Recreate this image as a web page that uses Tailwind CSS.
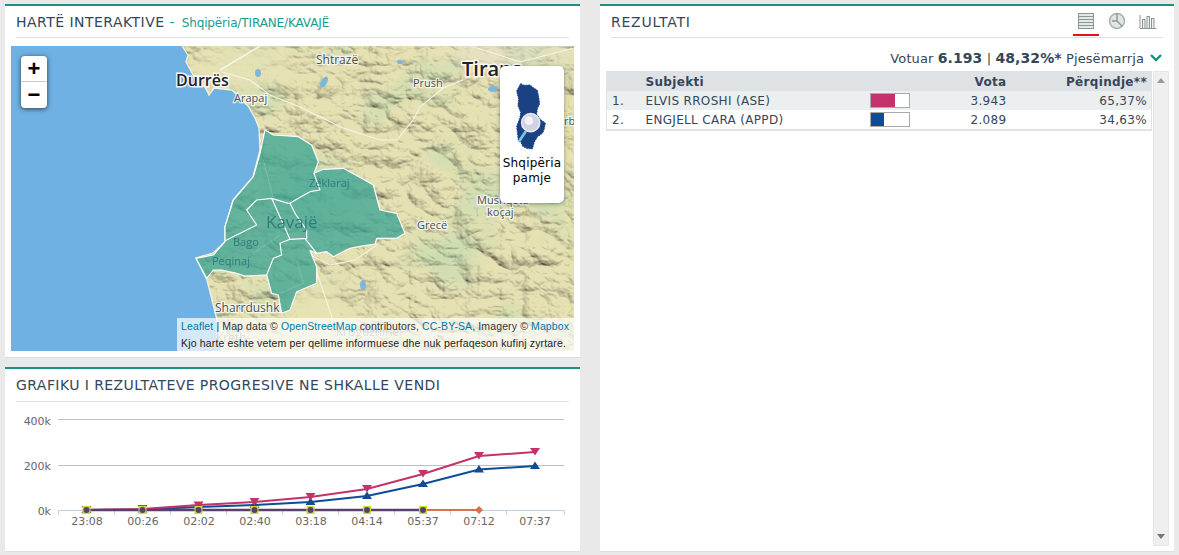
<!DOCTYPE html>
<html lang="sq">
<head>
  <meta charset="UTF-8">
  <title>Rezultatet - Kavajë</title>
  <script src="https://cdn.jsdelivr.net/npm/@tailwindcss/browser@4"></script>
</head>
<body class="bg-[#e9e9e9] text-[#34465a] font-['DejaVu_Sans',sans-serif] overflow-hidden">
  <div class="w-[1179px] h-[555px] pl-[5px] pt-[4px] flex gap-[20px]">

    <!-- left column -->
    <div class="w-[575px] flex flex-col gap-[10px]">

      <!-- map panel -->
      <section class="h-[353px] bg-white border-t-2 border-[#1a8f85] px-[6px] shadow-[0_1px_0_#dedede]">
        <div class="mx-[5px] h-[32px] pt-[7px] border-b border-[#e0e0e0] flex items-baseline text-[14px] leading-[18px] whitespace-nowrap">
          <h2 class="tracking-[.47px]">HARTË INTERAKTIVE</h2>
          <span class="text-[#1a9b8f] ml-[5px]">-</span>
          <span class="text-[#1a9b8f] text-[12px] ml-[7px] tracking-[-.12px]">Shqipëria/TIRANE/KAVAJË</span>
        </div>
        <div class="relative mt-[8px] w-[563px] h-[305px] overflow-hidden bg-[#6fb1e3]">
          <svg class="absolute inset-0" width="563" height="305" viewBox="11 46 563 305">
            <defs>
              <clipPath id="land"><path d="M182 46 188 55 186 62 197 82 205 87 209 95 214 88 232 90 248 106 255 118 259 128 260 150 253 177 233 200 225 227 225 242 213 253 196 258 207 280 212 300 217 320 222 351H574V46Z"/></clipPath>
              <filter id="hill" x="0" y="0" width="100%" height="100%">
                <feTurbulence type="turbulence" baseFrequency=".022 .03" numOctaves="5" seed="23"/>
                <feDiffuseLighting surfaceScale="9" diffuseConstant="1.17" lighting-color="#fff">
                  <feDistantLight azimuth="300" elevation="58"/>
                </feDiffuseLighting>
              </filter>
              <filter id="green" x="0" y="0" width="100%" height="100%">
                <feTurbulence type="fractalNoise" baseFrequency=".014 .018" numOctaves="3" seed="4"/>
                <feColorMatrix values="0 0 0 0 .58  0 0 0 0 .72  0 0 0 0 .44  3.6 0 0 0 -1.75"/>
              </filter>
              <filter id="soft"><feGaussianBlur stdDeviation="14"/></filter>
            </defs>
            <g clip-path="url(#land)">
              <rect x="11" y="46" width="563" height="305" fill="#e6e1b2"/>
              <rect x="11" y="46" width="563" height="305" filter="url(#green)" opacity=".8"/>
              <rect class="mix-blend-multiply" x="11" y="46" width="563" height="305" filter="url(#hill)" opacity=".6"/>
              <path d="M185 46H300L270 85 235 100 205 90Z" fill="#e6e2b4" filter="url(#soft)"/>
              <path d="M290 285 345 280 350 351H270Z" fill="#e8e3b2" filter="url(#soft)"/>
              <path d="M430 46H574V60L480 72Z" fill="#e6e0c6" filter="url(#soft)"/>
            </g>
            <path d="M182 46 188 55 186 62 197 82 205 87 209 95 214 88 232 90 248 106 255 118 259 128 260 150 253 177 233 200 225 227 225 242 213 253 196 258 207 280 212 300 217 320 222 351" fill="none" stroke="#f3f2e0" stroke-width="1.3"/>
            <!-- roads -->
            <g fill="none" stroke="#f6f4e6">
              <path stroke-width="1.6" d="M220 70 260 46"/>
              <path stroke-width="1.1" d="M463 80 443 88 420 107 413 120 397 140 380 140 343 128 300 107 270 95 250 80 222 72"/>
              <path stroke-width="1.1" d="M305 238 333 320"/>
              <path stroke-width="1" d="M310 255 330 265 355 260 378 244"/>
              <path stroke-width="1" d="M470 46 490 52 520 62 574 48"/>
            </g>
            <!-- lakes -->
            <g fill="#7cb6dc">
              <ellipse cx="258" cy="73" rx="3" ry="4"/>
              <ellipse cx="324" cy="82" rx="3" ry="6" transform="rotate(30 324 82)"/>
              <ellipse cx="400" cy="62" rx="3" ry="2"/>
              <ellipse cx="493" cy="89" rx="5" ry="3"/>
              <ellipse cx="363" cy="285" rx="3" ry="5"/>
            </g>
            <!-- place names -->
            <g font-family="'Open Sans',sans-serif" fill="#45504c" stroke="#fff" stroke-opacity=".75" stroke-width="2.500" paint-order="stroke">
              <text x="176" y="86" font-size="16" font-weight="600" fill="#222" stroke-opacity=".9" stroke-width="3">Durrës</text>
              <text x="234" y="102" font-size="11">Arapaj</text>
              <text x="316" y="64" font-size="12">Shtrazë</text>
              <text x="413" y="87" font-size="11">Prush</text>
              <text x="462" y="76" font-size="20" font-weight="600" fill="#222" stroke-opacity=".9" stroke-width="3">Tirana</text>
              <text x="564" y="125" font-size="11">rb</text>
              <text x="417" y="229" font-size="11">Grecë</text>
              <text x="477" y="204" font-size="11">Mushqeta</text>
              <text x="487" y="216" font-size="11">koçaj</text>
              <text x="215" y="312" font-size="12">Sharrdushk</text>
              <text x="216" y="342" font-size="12" opacity=".55">Kreth-</text>
              <text x="336" y="336" font-size="12" opacity=".55">Krogozhine</text>
            </g>
            <!-- Kavajë units, traced in zoomed crop coordinates -->
            <g transform="translate(170 120) scale(.33333)">
              <path fill="#3fa595" fill-opacity=".78" stroke="#fff" stroke-width="3.500" stroke-linejoin="round" d="M285 30 310 45 385 50 425 75 445 125 432 160 460 148 520 145 580 178 610 195 630 270 680 280 705 340 680 355 620 355 615 372 575 378 540 385 490 410 470 395 440 400 420 392 440 440 440 490 380 515 360 570 335 580 325 525 305 520 290 465 225 468 200 460 155 450 130 450 110 475 78 415 130 405 165 365 165 320 190 240 250 170 270 100Z"/>
              <g fill="none" stroke="#fff" stroke-width="3.500" stroke-linejoin="round">
                <path d="M165 362 260 315 230 270 260 240 305 235 360 358 410 355 410 330 375 280 360 250 385 235 420 215 450 210 432 160"/>
                <path d="M305 235 355 250 360 250"/>
                <path d="M360 358 330 370 335 405 310 415 290 465"/>
                <path d="M405 355 440 400"/>
              </g>
              <g fill="none" stroke="#fff" stroke-opacity=".25" stroke-width="2">
                <path d="M280 120 310 235"/>
                <path d="M250 400 330 345"/>
                <path d="M380 420 400 490 330 520"/>
              </g>
            </g>
            <g font-family="'Open Sans',sans-serif" fill="#2a7678" opacity=".9">
              <text x="266" y="228" font-size="17">Kavajë</text>
              <text x="309" y="187" font-size="11">Zëklaraj</text>
              <text x="233" y="246" font-size="11">Bago</text>
              <text x="212" y="265" font-size="11">Peqinaj</text>
            </g>
          </svg>

          <!-- zoom control -->
          <div class="absolute left-[10px] top-[10px] w-[26px] h-[52px] bg-white rounded-[4px] shadow-[0_1px_5px_rgba(0,0,0,.65)] flex flex-col text-black font-bold font-['Liberation_Sans',sans-serif]">
            <span class="h-[26px] border-b border-[#ccc] flex items-center justify-center text-[22px] leading-none">+</span>
            <span class="h-[26px] flex items-center justify-center text-[22px] leading-none">−</span>
          </div>

          <!-- country view button -->
          <div class="absolute left-[489px] top-[20px] w-[64px] h-[137px] bg-white rounded-[5px] shadow-[0_1px_4px_rgba(0,0,0,.35)] flex flex-col items-center">
            <svg width="64" height="90" viewBox="600 197 192 270">
              <path fill="#1a4182" stroke="#1a4182" stroke-width="3" stroke-dasharray="5 3" d="M662 250 672 255 690 254 700 262 712 270 716 290 719 310 712 325 710 342 722 358 736 368 733 385 728 398 712 410 703 425 697 446 680 444 668 438 662 424 655 420 652 395 650 378 660 352 662 336 654 316 656 296 650 272Z"/>
              <path stroke="#7cc4e4" stroke-width="8" d="M678 392 656 425"/>
              <circle cx="692" cy="367" r="27" fill="#d2d2e6" stroke="#e9e9f2" stroke-width="5"/>
              <circle cx="687" cy="361" r="13" fill="#f2f2f8"/>
            </svg>
            <span class="text-[12px] leading-[15px] text-center text-black tracking-[.2px]">Shqipëria<br>pamje</span>
          </div>

          <!-- attribution -->
          <div class="absolute right-0 bottom-0 w-[397px] h-[33px] pl-[4px] bg-white/70 font-['Liberation_Sans',sans-serif] text-[10.5px] leading-[17px] text-[#333] whitespace-nowrap">
            <p class="tracking-[.12px]"><a class="text-[#0078a8]">Leaflet</a> | Map data © <a class="text-[#0078a8]">OpenStreetMap</a> contributors, <a class="text-[#0078a8]">CC-BY-SA</a>, Imagery © <a class="text-[#0078a8]">Mapbox</a></p>
            <p class="text-[#222] tracking-[.16px]">Kjo harte eshte vetem per qellime informuese dhe nuk perfaqeson kufinj zyrtare.</p>
          </div>
        </div>
      </section>

      <!-- progress chart panel -->
      <section class="h-[184px] bg-white border-t-2 border-[#1a8f85] px-[11px] shadow-[0_1px_0_#dedede]">
        <h2 class="h-[33px] pt-[7px] border-b border-[#e0e0e0] text-[14px] leading-[18px] tracking-[.43px] whitespace-nowrap">GRAFIKU I REZULTATEVE PROGRESIVE NE SHKALLE VENDI</h2>
        <svg class="-ml-[11px]" width="575" height="148" viewBox="5 402 575 148" font-family="'DejaVu Sans',sans-serif" font-size="11" fill="#666">
          <path stroke="#c0c0c0" d="M58 419.5H564M58 465.5H564"/>
          <path stroke="#c0d0e0" fill="none" d="M58.5 515V510.5H564.5V515M114.5 510V515M170.5 510V515M226.5 510V515M282.5 510V515M338.5 510V515M394.5 510V515M450.5 510V515M506.5 510V515"/>
          <g text-anchor="end">
            <text x="51" y="425">400k</text>
            <text x="51" y="470">200k</text>
            <text x="51" y="515">0k</text>
          </g>
          <g text-anchor="middle">
            <text x="87" y="525">23:08</text>
            <text x="143" y="525">00:26</text>
            <text x="199" y="525">02:02</text>
            <text x="255" y="525">02:40</text>
            <text x="311" y="525">03:18</text>
            <text x="367" y="525">04:14</text>
            <text x="423" y="525">05:37</text>
            <text x="479" y="525">07:12</text>
            <text x="535" y="525">07:37</text>
          </g>
          <path fill="none" stroke="#d9704e" stroke-width="2" d="M86.5 510H479"/>
          <path fill="#d9704e" d="M479 506 483 510 479 514 475 510Z"/>
          <path fill="none" stroke="#0f4c96" stroke-width="2" d="M86.5 510 142.5 509.5 198.5 507 254.5 505 310.5 502 367 496 423 484 479 469.5 535 466"/>
          <path fill="#0f4c96" d="M86.5 505.500 91.500 513H81.500ZM142.5 505 147.500 512.500H137.500ZM198.5 502.500 203.500 510H193.500ZM254.5 500.500 259.500 508H249.500ZM310.5 497.500 315.500 505H305.500ZM367 491.500 372 499H362ZM423 479.500 428 487H418ZM479 465 484 472.500H474ZM535 461.500 540 469H530Z"/>
          <path fill="none" stroke="#c4326b" stroke-width="2" d="M86.5 510 142.500 509 198.500 505 254.500 502 310.500 497 367 489 423 474 479 456 535 452"/>
          <path fill="#c4326b" d="M81.500 506H91.500L86.500 513.500ZM137.500 505H147.500L142.500 512.500ZM193.500 501.500H203.500L198.500 509ZM249.500 498H259.500L254.500 505.500ZM305.500 493H315.500L310.500 500.500ZM362 485H372L367 492.500ZM418 470H428L423 477.500ZM474 452H484L479 459.500ZM530 448H540L535 455.500Z"/>
          <path fill="none" stroke="#5b3f6b" stroke-width="2.500" d="M86.5 510H423"/>
          <g fill="#c8e020">
            <rect x="82.500" y="506" width="8" height="8"/>
            <rect x="138.500" y="506" width="8" height="8"/>
            <rect x="194.500" y="506" width="8" height="8"/>
            <rect x="250.500" y="506" width="8" height="8"/>
            <rect x="306.500" y="506" width="8" height="8"/>
            <rect x="363" y="506" width="8" height="8"/>
            <rect x="419" y="506" width="8" height="8"/>
          </g>
          <g fill="#5b3f6b">
            <circle cx="86.500" cy="510" r="3"/>
            <circle cx="142.500" cy="510" r="3"/>
            <circle cx="198.500" cy="510" r="3"/>
            <circle cx="254.500" cy="510" r="3"/>
            <circle cx="310.500" cy="510" r="3"/>
            <circle cx="367" cy="510" r="3"/>
            <circle cx="423" cy="510" r="3"/>
          </g>
        </svg>
      </section>
    </div>

    <!-- results panel -->
    <section class="w-[574px] h-[547px] bg-white border-t-2 border-[#1a8f85] flex flex-col shadow-[0_1px_0_#dedede]">
      <div class="mx-[11px] h-[32px] pt-[7px] border-b border-[#e0e0e0] flex justify-between text-[14px] leading-[18px]">
        <h2 class="tracking-[.75px]">REZULTATI</h2>
        <div class="flex gap-[5px] -mt-[1px] mr-[2px] h-[24px]">
          <span class="w-[26px] h-[24px] border-b-2 border-[#e8101c] flex justify-center">
            <svg width="18" height="18" viewBox="0 0 18 18" fill="#e4e8e6" stroke="#8a9692"><rect x="1.500" y="1.500" width="15" height="15"/><path d="M1.500 4.500H16.500M1.500 7.500H16.500M1.500 10.500H16.500M1.500 13.500H16.500"/></svg>
          </span>
          <span class="w-[26px] flex justify-center">
            <svg width="18" height="18" viewBox="0 0 18 18" fill="#e2e5e3" stroke="#a3adaa" stroke-width="1.400"><circle cx="9" cy="9" r="7.500"/><path fill="none" stroke="#8b9693" d="M9 1.500V9L14 14M9 9 4 9"/></svg>
          </span>
          <span class="w-[26px] flex justify-center">
            <svg width="18" height="18" viewBox="0 0 18 18" fill="#eef0ee" stroke="#8a9692"><path fill="none" d="M1 3V16.500H17.500"/><rect x="3.500" y="7.500" width="2.500" height="9"/><rect x="8" y="4.500" width="2.500" height="12"/><rect x="12.500" y="6.500" width="2.500" height="10"/></svg>
          </span>
        </div>
      </div>

      <div class="mt-[9px] pr-[11px] h-[22px] flex justify-end items-center gap-[5px] text-[13px] whitespace-nowrap">
        <p class="tracking-[.1px]">Votuar <b class="text-[14px]">6.193</b> | <b class="text-[14px]">48,32%*</b> Pjesëmarrja</p>
        <svg width="14" height="10" viewBox="0 0 14 10" fill="none" stroke="#1a8f85" stroke-width="2.400"><path d="M2 2 7 7 12 2"/></svg>
      </div>

      <div class="flex flex-1 min-h-0 pl-[6px] pr-[5px] pb-[5px] mt-[2px]">
        <table class="w-[546px] h-fit table-fixed border-collapse text-[12px] tracking-[.32px] text-[#34465a] border-b-2 border-x border-[#e2e2e2]">
          <thead>
            <tr class="h-[20px] bg-[#dfe2e4]">
              <th class="w-[39px] pt-[2px]"></th>
              <th class="w-[224px] pt-[2px] text-left font-bold">Subjekti</th>
              <th class="w-[40px] pt-[2px]"></th>
              <th class="w-[97px] pt-[2px] text-right font-bold">Vota</th>
              <th class="pt-[2px] text-right font-bold pr-[4px]">Përqindje**</th>
            </tr>
          </thead>
          <tbody>
            <tr class="h-[19px] bg-[#eceff0]">
              <td class="pl-[5px]">1.</td>
              <td>ELVIS RROSHI (ASE)</td>
              <td><div class="w-[40px] h-[15px] border border-[#aaa] bg-white"><div class="h-full bg-[#c4326b]" style="width:65.37%"></div></div></td>
              <td class="text-right">3.943</td>
              <td class="text-right pr-[4px]">65,37%</td>
            </tr>
            <tr class="h-[20px] bg-white">
              <td class="pl-[5px]">2.</td>
              <td>ENGJELL CARA (APPD)</td>
              <td><div class="w-[40px] h-[15px] border border-[#aaa] bg-white"><div class="h-full bg-[#0f4c96]" style="width:34.63%"></div></div></td>
              <td class="text-right">2.089</td>
              <td class="text-right pr-[4px]">34,63%</td>
            </tr>
          </tbody>
        </table>
        <div class="ml-[1px] w-[16px] bg-[#efefef] border border-[#e6e6e6] flex flex-col justify-between items-center py-[6px]">
          <span class="w-0 h-0 border-x-[4px] border-x-transparent border-b-[5px] border-b-[#999]"></span>
          <span class="w-0 h-0 border-x-[4px] border-x-transparent border-t-[5px] border-t-[#777]"></span>
        </div>
      </div>
    </section>
  </div>
</body>
</html>
